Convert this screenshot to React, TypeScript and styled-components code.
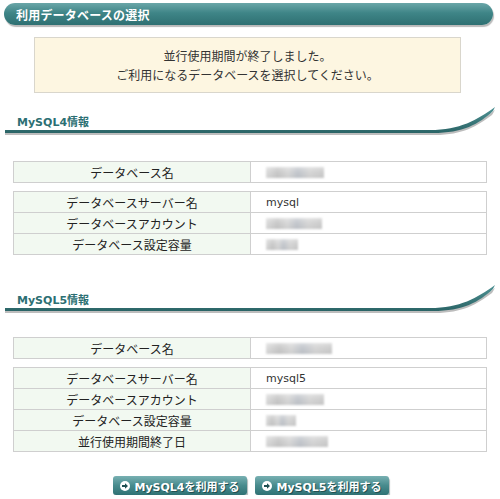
import React from 'react';
import styled, { createGlobalStyle } from 'styled-components';

interface InfoRow {
  label: string;
  value?: string;
  mask?: number;
}

interface InfoSection {
  title: string;
  name: InfoRow;
  rows: InfoRow[];
}

const GlobalStyle = createGlobalStyle`
  body {
    margin: 0;
    background: #ffffff;
    font-family: "DejaVu Sans", "Noto Sans CJK JP", sans-serif;
    color: #222222;
  }
`;

const Page = styled.div`
  width: 500px;
  padding-top: 3px;
  box-sizing: border-box;
`;

const TitleBar = styled.h1`
  margin: 0 0 0 4px;
  width: 489px;
  height: 22px;
  box-sizing: border-box;
  padding-left: 12px;
  display: flex;
  align-items: center;
  border-radius: 11px;
  background: linear-gradient(#6aa6a8 0%, #3f8587 45%, #2e7072 100%);
  box-shadow: 1px 2px 1px #b9b9b9;
  color: #ffffff;
  font-family: "Noto Sans CJK JP", sans-serif;
  font-size: 12px;
  font-weight: 700;
  letter-spacing: 0.2px;
`;

const Notice = styled.div`
  margin: 12px 0 0 34px;
  width: 427px;
  height: 56px;
  box-sizing: border-box;
  border: 1px solid #d9d6cc;
  background: #fdf6e1;
  display: flex;
  flex-direction: column;
  align-items: center;
  justify-content: center;
  gap: 3px;
  font-family: "Noto Sans CJK JP", sans-serif;
  font-size: 12px;
  line-height: 16px;
  color: #333333;
`;

const SectionHead = styled.div<{ $top: number }>`
  margin: ${props => props.$top}px 0 0 5px;
  width: 490px;
  height: 30px;
  display: grid;

  & > * {
    grid-area: 1 / 1;
  }
`;

const SectionTitle = styled.h2`
  margin: 0;
  padding: 7px 0 0 12px;
  font-size: 11px;
  font-weight: 700;
  color: #2c6f73;
  font-family: "DejaVu Sans", "Noto Sans CJK JP", sans-serif;
`;

const Table = styled.table<{ $top: number }>`
  margin: ${props => props.$top}px 0 0 13px;
  width: 474px;
  border-collapse: collapse;
  font-family: "Noto Sans CJK JP", sans-serif;
  font-size: 12px;
`;

const LabelCell = styled.th`
  width: 236px;
  height: 20px;
  padding: 0;
  border: 1px solid #cfcfcf;
  background: #f2f9f1;
  font-weight: 400;
  color: #222222;
  text-align: center;
`;

const ValueCell = styled.td`
  height: 20px;
  padding: 0 0 0 15px;
  border: 1px solid #cfcfcf;
  background: #ffffff;
  font-family: "DejaVu Sans", "Noto Sans CJK JP", sans-serif;
  font-size: 11px;
  color: #333333;
`;

const Masked = styled.span`
  display: inline-block;
  height: 11px;
  vertical-align: middle;
  background: linear-gradient(
      180deg,
      rgba(255, 255, 255, 0.35) 0%,
      rgba(255, 255, 255, 0) 45%,
      rgba(0, 0, 0, 0.04) 100%
    ),
    linear-gradient(
      90deg,
      #dcdcdc 0%,
      #c8c8c8 20%,
      #d8d8d8 38%,
      #c2c6cc 55%,
      #d6d6d6 75%,
      #cccccc 100%
    );
  filter: blur(1px);
`;

const Buttons = styled.div`
  margin: 24px 0 0 113px;
  display: flex;
  gap: 8px;
`;

const Button = styled.button`
  width: 134px;
  height: 19px;
  padding: 0;
  border: none;
  border-radius: 3px;
  background: linear-gradient(#78b0b2 0%, #488b8d 50%, #2f7274 100%);
  box-shadow: 1px 2px 1px #aeb8b8;
  color: #ffffff;
  font-family: "DejaVu Sans", "Noto Sans CJK JP", sans-serif;
  font-size: 11px;
  font-weight: 700;
  text-shadow: 1px 1px 0 #234f50;
  display: flex;
  align-items: center;
  justify-content: center;
  gap: 4px;
  cursor: pointer;
`;

const ArrowDot = styled.span`
  width: 10px;
  height: 10px;
  border-radius: 50%;
  background: #ffffff;
  display: inline-flex;
  align-items: center;
  justify-content: center;
`;

const Swoosh: React.FC = () => (
  <svg width="490" height="30" viewBox="0 0 490 30">
    <defs>
      <linearGradient id="swooshFill" x1="0" y1="0" x2="0" y2="1">
        <stop offset="0" stopColor="#4f9294" />
        <stop offset="1" stopColor="#2a6466" />
      </linearGradient>
    </defs>
    <path
      d="M0 26 H430 C458 26 474 16 490 4 L487 9 C472 20 458 29 430 29 H0 Z"
      fill="#bdbdbd"
    />
    <path
      d="M0 24 H425 C455 24 472 14 490 1 L488 5 C474 18 458 27 428 27 H0 Z"
      fill="url(#swooshFill)"
    />
  </svg>
);

const sections: InfoSection[] = [
  {
    title: 'MySQL4情報',
    name: { label: 'データベース名', mask: 58 },
    rows: [
      { label: 'データベースサーバー名', value: 'mysql' },
      { label: 'データベースアカウント', mask: 56 },
      { label: 'データベース設定容量', mask: 32 }
    ]
  },
  {
    title: 'MySQL5情報',
    name: { label: 'データベース名', mask: 66 },
    rows: [
      { label: 'データベースサーバー名', value: 'mysql5' },
      { label: 'データベースアカウント', mask: 58 },
      { label: 'データベース設定容量', mask: 30 },
      { label: '並行使用期間終了日', mask: 62 }
    ]
  }
];

const Row: React.FC<{ row: InfoRow }> = ({ row }) => (
  <tr>
    <LabelCell>{row.label}</LabelCell>
    <ValueCell>
      {row.value ? row.value : <Masked style={{ width: row.mask }} />}
    </ValueCell>
  </tr>
);

const App: React.FC = () => {
  return (
    <Page>
      <GlobalStyle />
      <TitleBar>利用データベースの選択</TitleBar>
      <Notice>
        <span>並行使用期間が終了しました。</span>
        <span>ご利用になるデータベースを選択してください。</span>
      </Notice>
      {sections.map((section, i) => (
        <React.Fragment key={section.title}>
          <SectionHead $top={i === 0 ? 13 : 29}>
            <Swoosh />
            <SectionTitle>{section.title}</SectionTitle>
          </SectionHead>
          <Table $top={i === 0 ? 25 : 23}>
            <tbody>
              <Row row={section.name} />
            </tbody>
          </Table>
          <Table $top={8}>
            <tbody>
              {section.rows.map(row => (
                <Row key={row.label} row={row} />
              ))}
            </tbody>
          </Table>
        </React.Fragment>
      ))}
      <Buttons>
        {['MySQL4を利用する', 'MySQL5を利用する'].map(text => (
          <Button key={text}>
            <ArrowDot>
              <svg width="8" height="8" viewBox="0 0 8 8">
                <path d="M1 3 H4 V1.2 L7 4 L4 6.8 V5 H1 Z" fill="#1f4f51" />
              </svg>
            </ArrowDot>
            {text}
          </Button>
        ))}
      </Buttons>
    </Page>
  );
};

export default App;
